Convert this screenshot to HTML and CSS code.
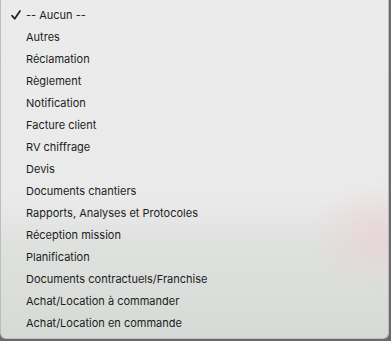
FILE: index.html
```html
<!DOCTYPE html>
<html lang="fr">
<head>
    <meta charset="UTF-8">
    <meta name="viewport" content="width=device-width, initial-scale=1.0">
    <title>Type de document</title>
    <link rel="stylesheet" href="styles.css">
</head>
<body>

    <div class="menu">
        <ul class="menu-list">
            <li class="menu-item selected">
                <span class="check">
                    <svg width="10" height="10" viewBox="0 0 10 10"><path d="M1 5.6 L3.7 8.8 L9 1" fill="none" stroke="#1e1e1e" stroke-width="1.7" stroke-linecap="round" stroke-linejoin="round"/></svg>
                </span>
                -- Aucun --
            </li>
            <li class="menu-item">Autres</li>
            <li class="menu-item">Réclamation</li>
            <li class="menu-item">Règlement</li>
            <li class="menu-item">Notification</li>
            <li class="menu-item">Facture client</li>
            <li class="menu-item">RV chiffrage</li>
            <li class="menu-item">Devis</li>
            <li class="menu-item">Documents chantiers</li>
            <li class="menu-item">Rapports, Analyses et Protocoles</li>
            <li class="menu-item">Réception mission</li>
            <li class="menu-item">Planification</li>
            <li class="menu-item">Documents contractuels/Franchise</li>
            <li class="menu-item">Achat/Location à commander</li>
            <li class="menu-item">Achat/Location en commande</li>
        </ul>
    </div>

</body>
</html>
```

FILE: styles.css
```css
body {
    margin: 0;
    padding: 0;
    width: 391px;
    height: 341px;
    background-color: #6a6a6a;
    font-family: 'Inter', 'Liberation Sans', sans-serif;
    overflow: hidden;
}

.menu {
    width: 389px;
    height: 339px;
    box-sizing: border-box;
    border-radius: 0 0 6px 6px;
    border: 1px solid #bdbdbd;
    border-top: none;
    background:
        radial-gradient(ellipse 65px 55px at 378px 235px, rgba(236, 205, 208, 0.6), rgba(236, 205, 208, 0) 100%),
        linear-gradient(to bottom, #ebebeb 0%, #eaeaea 58%, #dfe1df 72%, #d6dad6 100%);
}

.menu-list {
    list-style: none;
    margin: 0;
    padding: 4px 0 0 0;
}

.menu-item {
    position: relative;
    height: 22px;
    line-height: 22px;
    padding-left: 25px;
    font-size: 11px;
    color: #1c1c1c;
}

/* checkmark for the selected option */
.check {
    position: absolute;
    left: 10px;
    top: 6px;
    width: 10px;
    height: 10px;
}

.check svg {
    display: block;
}
```
